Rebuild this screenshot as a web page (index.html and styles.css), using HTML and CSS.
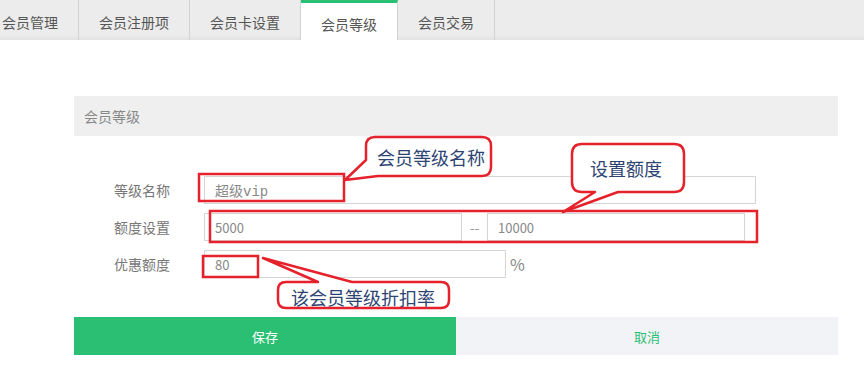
FILE: index.html
```html
<!DOCTYPE html>
<html lang="zh">
<head>
  <meta charset="UTF-8" />
  <title>会员等级</title>
  <link rel="stylesheet" href="styles.css">
</head>
<body>
  <div class="tabs">
    <a class="tab first" href="#">会员管理</a>
    <a class="tab" href="#">会员注册项</a>
    <a class="tab" href="#">会员卡设置</a>
    <a class="tab active" href="#">会员等级</a>
    <a class="tab" href="#">会员交易</a>
  </div>

  <div class="panel">
    <div class="panel-title">会员等级</div>

    <div class="form">
      <div class="row">
        <label>等级名称</label>
        <input class="input name" type="text" value="超级vip">
      </div>
      <div class="row">
        <label>额度设置</label>
        <input class="input range" type="text" value="5000">
        <span class="sep">--</span>
        <input class="input range" type="text" value="10000">
      </div>
      <div class="row">
        <label>优惠额度</label>
        <input class="input rate" type="text" value="80">
        <span class="unit">%</span>
      </div>
    </div>

    <div class="actions">
      <button class="btn save">保存</button>
      <button class="btn cancel">取消</button>
    </div>
  </div>

  <!-- annotations drawn over the form -->
  <svg class="notes" width="864" height="365" viewBox="0 0 864 365">
    <rect class="mark" x="199" y="174" width="145" height="27" />
    <rect class="mark" x="210" y="211" width="547" height="31" />
    <rect class="mark" x="203" y="256" width="55" height="21" />

    <path class="bubble" d="M375,137 H482 Q491,137 491,146 V167 Q491,176 482,176 H378 L345,180 L366,160 V146 Q366,137 375,137 Z" />
    <text class="note" x="377" y="157">会员等级名称</text>

    <path class="bubble" d="M582,144 H674 Q684,144 684,154 V182 Q684,192 674,192 H618 L563,212 L595,192 H582 Q572,192 572,182 V154 Q572,144 582,144 Z" />
    <text class="note" x="590" y="168">设置额度</text>

    <path class="bubble" d="M286,282 H318 L263,258 L352,282 H441 Q449,282 449,290 V300 Q449,308 441,308 H286 Q278,308 278,300 V290 Q278,282 286,282 Z" />
    <text class="note" x="291" y="297">该会员等级折扣率</text>
  </svg>
</body>
</html>
```

FILE: styles.css
```css
body {
  margin: 0;
  font-family: "Noto Sans CJK SC", sans-serif;
  font-size: 14px;
  color: #666;
  background: #fff;
  position: relative;
  width: 864px;
  height: 365px;
  overflow: hidden;
}

.tabs {
  display: flex;
  height: 40px;
  background: linear-gradient(#ececec 0, #ececec 35px, #e2e2e2 40px);
}
.tab {
  display: block;
  height: 40px;
  box-sizing: border-box;
  padding: 4px 20px 0;
  line-height: 36px;
  border-right: 1px solid #d2d2d2;
  color: #555;
  text-decoration: none;
  white-space: nowrap;
}
.tab.first { margin-left: -18px; }
.tab.active {
  background: #fff;
  border-top: 3px solid #2bbf73;
  padding-top: 6px;
  line-height: 31px;
}

.panel {
  margin: 56px 0 0 74px;
  width: 764px;
}
.panel-title {
  height: 40px;
  line-height: 40px;
  padding-left: 10px;
  background: #efefef;
  color: #888;
}

.form {
  padding-top: 40px;
  display: flex;
  flex-direction: column;
  gap: 9px;
}
.row {
  display: flex;
  align-items: center;
  height: 28px;
}
.row label {
  width: 96px;
  margin-right: 34px;
  text-align: right;
  color: #777;
}
.input {
  box-sizing: border-box;
  height: 28px;
  padding: 0 10px;
  border: 1px solid #d5d5d5;
  font-family: "Noto Sans CJK SC", sans-serif;
  font-size: 13px;
  color: #888;
  outline: none;
}
.input.name {
  width: 552px;
  font-family: "Liberation Mono", "Noto Sans CJK SC", monospace;
  font-size: 14px;
}
.input.range { width: 258px; }
.input.rate { width: 302px; }
.sep {
  width: 25px;
  text-align: center;
  color: #999;
}
.unit {
  margin-left: 4px;
  font-size: 16px;
  color: #888;
}

.actions {
  display: flex;
  margin-top: 39px;
}
.btn {
  flex: 1;
  height: 38px;
  border: none;
  font-family: inherit;
  font-size: 13px;
  cursor: pointer;
}
.save { background: #2bbf73; color: #fff; }
.cancel { background: #f2f3f7; color: #2bbf73; }

.notes {
  position: absolute;
  top: 0;
  left: 0;
  pointer-events: none;
}
.mark {
  fill: none;
  stroke: #e5222b;
  stroke-width: 2.5;
}
.bubble {
  fill: #fff;
  stroke: #e5222b;
  stroke-width: 2.5;
  stroke-linejoin: round;
}
.note {
  font-family: "Noto Sans CJK SC", sans-serif;
  font-size: 18px;
  fill: #2d4473;
  dominant-baseline: central;
}
```
